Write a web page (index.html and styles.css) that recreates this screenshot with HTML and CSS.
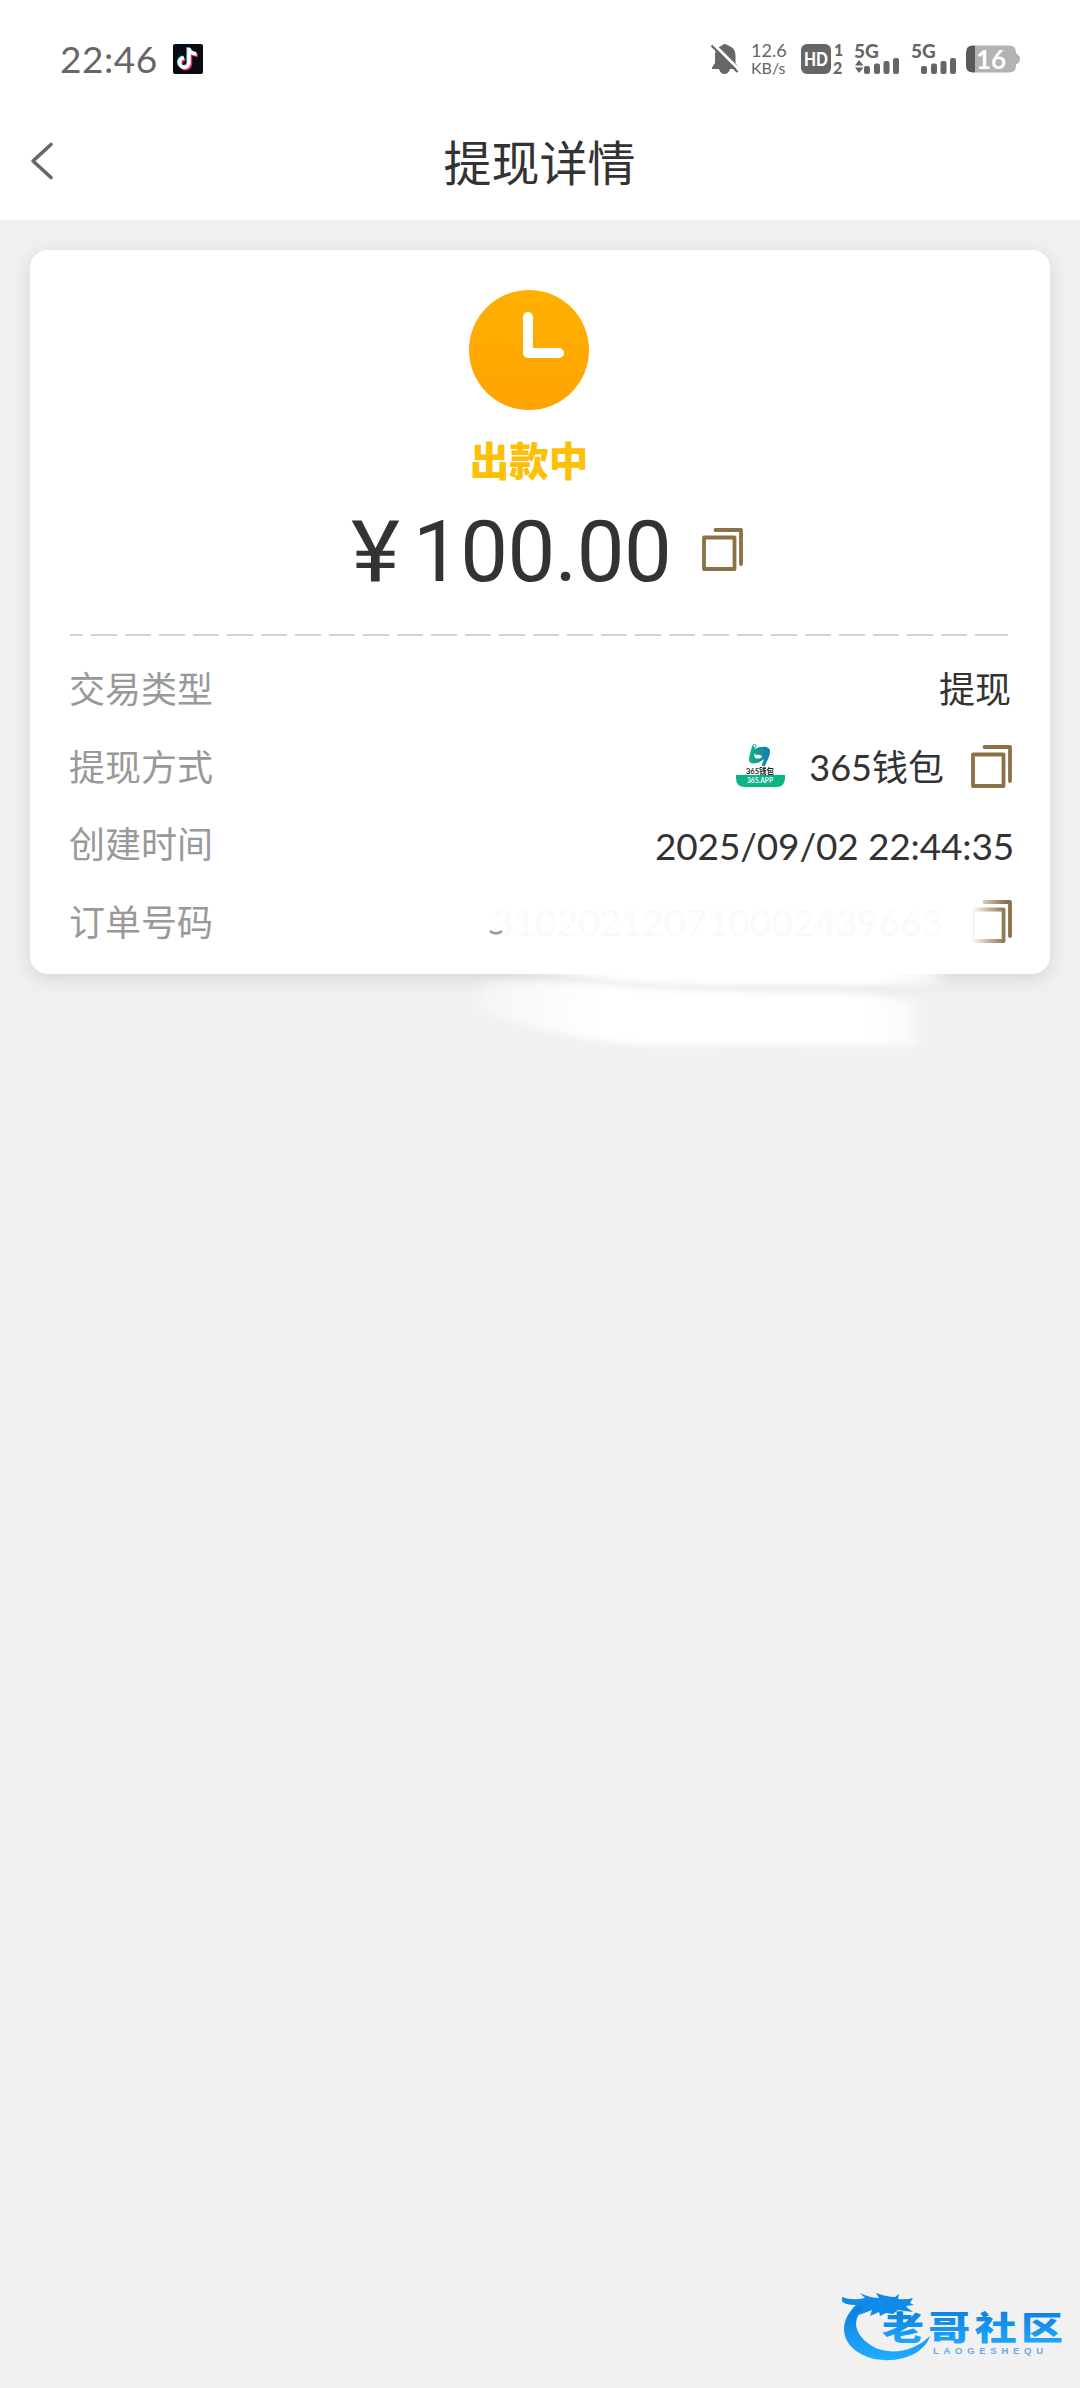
FILE: index.html
```html
<!DOCTYPE html>
<html lang="zh-CN">
<head>
<meta charset="utf-8">
<title>提现详情</title>
<link rel="stylesheet" href="styles.css">
</head>
<body>
<svg width="0" height="0" class="defs">
  <symbol id="copy" viewBox="0 0 41 43">
    <path d="M2 9.5h30.5v31.5h-30.5zM13.500 2h25.500v34" fill="none" stroke="#8a7147" stroke-width="3.8" stroke-linejoin="round" stroke-linecap="round"/>
  </symbol>
</svg>
<header class="top">
  <div class="status">
    <span class="time">22:46</span>
    <svg class="tiktok" width="30" height="30" viewBox="0 0 30 30">
      <rect width="30" height="30" rx="2" fill="#080a14"/>
      <g fill="none" stroke-width="3.6">
        <path d="M16 4v15a4.700 4.700 0 1 1-5-5M16 5c1 3 4 5 7.500 5" stroke="#35e5e0" transform="translate(-.8 -.7)"/>
        <path d="M16 4v15a4.700 4.700 0 1 1-5-5M16 5c1 3 4 5 7.500 5" stroke="#f0295c" transform="translate(1.400 1.200)"/>
        <path d="M16 4v15a4.700 4.700 0 1 1-5-5M16 5c1 3 4 5 7.500 5" stroke="#fff"/>
      </g>
    </svg>
    <div class="tray">
      <svg width="28" height="30" viewBox="711 44 28 30">
        <path d="M724.500 44c2 0 2.500 1 3.500 1.600 5 1.600 7.500 5 7.500 10v7.500l3 4.500v1.400h-26.500v-1.400l3-4.500v-7.500c0-5 2.500-8.400 7-10 .8-.6 1-1.600 2.500-1.600zM719 69h11c-1 3.300-3 5-5.500 5s-4.500-1.700-5.500-5z" fill="#666"/>
        <path d="M713 43.500l27 27" stroke="#fff" stroke-width="3"/>
        <path d="M711.500 45.500l26 26.500" stroke="#666" stroke-width="2.200"/>
      </svg>
      <div class="speed"><span>12.6</span><span class="unit">KB/s</span></div>
      <svg class="hd" width="43" height="30" viewBox="801 44 43 30">
        <rect x="801" y="44" width="30" height="30" rx="6" fill="#666"/>
        <text x="804" y="65.500" textLength="24" lengthAdjust="spacingAndGlyphs" class="hd-label">HD</text>
        <text x="834" y="56" class="tiny">1</text>
        <text x="833" y="74" class="tiny">2</text>
      </svg>
      <svg class="sig1" width="46" height="31" viewBox="854 44 46 31">
        <text x="854" y="57.500" class="fiveg">5G</text>
        <path d="M855 65.500l4-5.500 4.500 5.500zM855 67.500h8.500l-4.500 5.500z" fill="#666"/>
        <g fill="#666"><rect x="864" y="66" width="6" height="8" rx="2"/><rect x="874" y="63.500" width="6" height="10.500" rx="2"/><rect x="883.500" y="61" width="6" height="13" rx="2"/><rect x="893" y="58" width="6" height="16" rx="2"/></g>
      </svg>
      <svg class="sig2" width="46" height="31" viewBox="911 44 46 31">
        <text x="911" y="57.500" class="fiveg">5G</text>
        <g fill="#666"><rect x="921" y="66" width="6" height="8" rx="2"/><rect x="931" y="63.500" width="6" height="10.500" rx="2"/><rect x="940.500" y="61" width="6" height="13" rx="2"/><rect x="950" y="58" width="6" height="16" rx="2"/></g>
      </svg>
      <svg class="battery" width="54" height="28" viewBox="966 46.500 54 28">
        <path d="M975 47v27h34q7 0 7-7v-1q4-1.500 4-5.500t-4-5.500v-1q0-7-7-7z" fill="#b3b3b3"/>
        <path d="M975 47h-2q-7 0-7 7v13q0 7 7 7h2z" fill="#595959"/>
        <text x="976" y="70" class="level">16</text>
      </svg>
    </div>
  </div>
  <div class="nav">
    <svg class="back" width="24" height="38" viewBox="0 0 24 38"><path d="M21 2.500L3 19l18 16.500" fill="none" stroke="#666" stroke-width="3.600" stroke-linecap="round" stroke-linejoin="round"/></svg>
    <h1 class="title">提现详情</h1>
  </div>
</header>
<main class="card">
  <section class="summary">
    <svg width="120" height="120" viewBox="0 0 120 120">
      <defs><linearGradient id="amber" x2="0" y2="1"><stop stop-color="#ffb000"/><stop offset="1" stop-color="#ffa300"/></linearGradient></defs>
      <circle cx="60" cy="60" r="60" fill="url(#amber)"/>
      <path d="M59 27v36h31" fill="none" stroke="#fff" stroke-width="10" stroke-linecap="round" stroke-linejoin="round"/>
    </svg>
    <div class="state">出款中</div>
  </section>
  <div class="amount">
    <svg class="yen" width="62" height="80" viewBox="0 0 62 80"><text x="0" y="70" textLength="49" lengthAdjust="spacingAndGlyphs">¥</text></svg>
    <span class="sum">100.00</span><svg class="copy" width="41" height="43"><use href="#copy"/></svg>
  </div>
  <div class="divider"></div>
  <dl class="rows">
    <div class="row"><dt>交易类型</dt><dd class="kind">提现</dd></div>
    <div class="row"><dt>提现方式</dt>
      <dd>
        <svg class="wallet" width="49" height="46" viewBox="0 0 49 46">
          <defs><linearGradient id="teal"><stop stop-color="#0bb57f"/><stop offset="1" stop-color="#1779b5"/></linearGradient></defs>
          <path d="M16 3c-1 5-3 10-3 14 0 3 3 4 7 3 3 0 5-2 8-4-1 3-2 4-2 7h3c2-6 5-9 5-15 0-3-4-5-8-4-5 0-9 2-8 6 1 3 6 1 8 3 0 3-5 3-7 2-2-4 0-8 0-12z" fill="url(#teal)"/>
          <circle cx="18.500" cy="2.800" r="1.600" fill="#fff" stroke="#0bb57f"/>
          <text x="10" y="30.500" textLength="28" lengthAdjust="spacingAndGlyphs" class="brand">365钱包</text>
          <path d="M0 32h49v3q0 9-9 9H9q-9 0-9-9z" fill="#09b584"/>
          <text x="11" y="39.500" textLength="26" lengthAdjust="spacingAndGlyphs" class="brand-url">365.APP</text>
        </svg>
        <span class="method">365钱包</span><svg class="copy" width="41" height="43"><use href="#copy"/></svg>
      </dd>
    </div>
    <div class="row"><dt>创建时间</dt><dd class="date">2025/09/02 22:44:35</dd></div>
    <div class="row"><dt>订单号码</dt>
      <dd><span class="order">310202120710002439663</span><svg class="copy faded" width="41" height="43"><use href="#copy"/></svg></dd>
    </div>
  </dl>
  <svg class="smear" width="520" height="180" viewBox="460 890 520 180">
    <defs>
      <filter id="soft" x="-10%" y="-50%" width="120%" height="200%"><feGaussianBlur stdDeviation="7 3"/></filter>
      <linearGradient id="fade"><stop stop-color="#fff" stop-opacity=".35"/><stop offset=".28" stop-color="#fff"/><stop offset=".88" stop-color="#fff"/><stop offset="1" stop-color="#fff" stop-opacity=".6"/></linearGradient>
    </defs>
    <path d="M495 965C560 978 620 985 700 985H940V965z" fill="url(#fade)" filter="url(#soft)"/>
    <path d="M484 980Q570 978 640 988Q760 994 860 994L916 1002V1046Q840 1044 650 1045Q580 1044 480 1011z" fill="url(#fade)" filter="url(#soft)"/>
    <path d="M490 931q6 5 12 0" fill="none" stroke="#999" stroke-width="2.500"/>
  </svg>
</main>
<svg class="watermark" width="230" height="80" viewBox="840 2285 230 80">
  <defs>
    <linearGradient id="blue" x2="0" y2="1"><stop stop-color="#0878dc"/><stop offset="1" stop-color="#22adff"/></linearGradient>
  </defs>
  <path d="M862 2301C835 2318 838 2350 874 2359C903 2364 925 2352 930 2336C914 2352 889 2356 872 2346C848 2331 853 2310 875 2304z" fill="url(#blue)"/>
  <path d="M842 2297q10 4 23 1l-5-5q10 5 19 5l-3-5q11 4 19 4l4-3-1 5q9 1 15-1l-3 5 4 2-8 1 3 3 4 3-8-1-7-1-5 4-7-1-6 3-1-4-9 4 2-6-13 5 4-8-11 2 4-4q-12 0-14-4z" fill="#0f8ae8"/>
  <text transform="translate(882 2340) scale(1 .78)" textLength="181" class="club">老哥社区</text>
  <text x="933" y="2354" textLength="110" class="club-latin">LAOGESHEQU</text>
</svg>
</body>
</html>
```
FILE: styles.css
```css
* { box-sizing: border-box; }
body {
  margin: 0;
  min-height: 2388px;
  display: flex;
  flex-direction: column;
  background: #f1f1f1;
  color: #333;
  font-family: Lato, "Noto Sans CJK SC", sans-serif;
}
svg { display: block; flex: none; overflow: visible; }
.defs { position: absolute; }
.top { height: 220px; background: #fff; }
.status {
  display: flex;
  align-items: center;
  height: 118px;
  padding: 0 60px;
  color: #666;
}
.time { font-size: 37px; letter-spacing: .5px; width: 113px; line-height: 44px; }
.tray { display: flex; align-items: center; margin-left: auto; }
.speed {
  display: flex;
  flex-direction: column;
  margin-left: 12px;
  width: 50px;
  font-size: 18px;
  line-height: 17px;
}
.unit { font-size: 16px; }
.hd-label { font: 900 18px Lato, sans-serif; fill: #fff; }
.tiny { font: 900 16px Lato, sans-serif; fill: #666; }
.fiveg { font: 900 19px Lato, sans-serif; fill: #666; }
.sig1 { margin-left: 10px; }
.sig2 { margin-left: 11px; }
.battery { margin-left: 9px; }
.level { font: 700 26px Lato, sans-serif; fill: #fff; }
.nav { display: flex; align-items: center; height: 86px; padding: 0 30px; }
.title {
  flex: 1;
  margin: 0 25px 0 0;
  padding-bottom: 3px;
  text-align: center;
  font-size: 48px;
  font-weight: 400;
}
.card {
  position: relative;
  height: 724px;
  margin: 30px 30px 0;
  padding: 40px 36px 0 40px;
  background: #fff;
  border-radius: 18px;
  box-shadow: 0 4px 20px rgba(0, 0, 0, .12);
}
.summary { display: flex; flex-direction: column; align-items: center; padding-right: 26px; }
.state {
  height: 60px;
  margin-top: 21px;
  color: #fcc007;
  font-size: 39.500px;
  font-weight: 900;
  line-height: 59px;
}
.amount {
  display: flex;
  align-items: center;
  height: 120px;
  padding-left: 281px;
  font-family: Roboto, sans-serif;
  font-size: 85px;
}
.yen { fill: #333; }
.sum { width: 284px; letter-spacing: -.5px; padding-top: 1px; }
.amount .copy { margin-left: 5px; margin-top: -3px; }
.divider {
  height: 2px;
  margin: 23px 6px 0 0;
  background: repeating-linear-gradient(90deg, #d2d2d2 0 26px, transparent 26px 34px) -13px 0;
}
.rows { margin: 14px 0 0; }
.row { display: flex; justify-content: space-between; align-items: center; height: 77.500px; font-size: 36px; }
.row dt { color: #999; padding-bottom: 3px; margin-left: -1px; }
.row dd { display: flex; align-items: center; margin: 0; padding-right: 2px; }
.row .kind { padding-bottom: 3px; padding-right: 3px; }
.wallet { margin-right: 24px; }
.brand { font: 700 8px Lato, "Noto Sans CJK SC", sans-serif; fill: #222; }
.brand-url { font: 700 7px Lato, sans-serif; fill: #fff; }
.method { margin-right: 27px; padding-bottom: 3px; }
.row .date { font-size: 37px; letter-spacing: -.15px; padding-right: 0; padding-top: 3px; }
.order { margin-right: 28px; font-size: 37px; color: #fafafa; }
.faded { -webkit-mask-image: linear-gradient(90deg, transparent, #000 85%); mask-image: linear-gradient(90deg, transparent, #000 85%); }
.smear { position: absolute; left: 430px; top: 640px; }
.watermark { margin: auto 10px 23px auto; }
.club { font: 900 42px "Noto Sans CJK SC", sans-serif; fill: url(#blue); }
.club-latin { font: 700 9.500px "Liberation Sans", sans-serif; fill: #6aaae4; }
```
